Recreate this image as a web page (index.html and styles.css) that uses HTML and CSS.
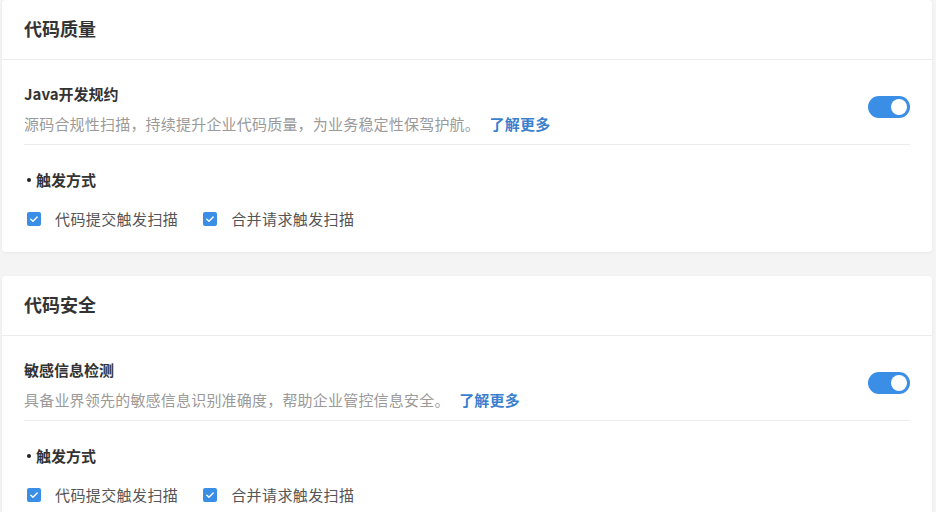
FILE: index.html
```html
<!DOCTYPE html>
<html>
<head>
    <title>代码扫描设置</title>
    <link rel="stylesheet" href="styles.css">
</head>
<body>
    <div class="page">
        <div class="card">
            <div class="card-header">代码质量</div>
            <div class="card-body">
                <div class="rule">
                    <div class="rule-text">
                        <div class="rule-title">Java开发规约</div>
                        <div class="rule-desc">源码合规性扫描，持续提升企业代码质量，为业务稳定性保驾护航。 <a href="#" class="more">了解更多</a></div>
                    </div>
                    <span class="switch on"><span class="knob"></span></span>
                </div>
                <div class="trigger-title"><span class="dot"></span>触发方式</div>
                <div class="checks">
                    <label class="check"><span class="box"><svg viewBox="0 0 14 14" width="14" height="14"><path d="M3.8 7.2 L6 9.3 L10.2 4.9" fill="none" stroke="#fff" stroke-width="1.4" stroke-linecap="round" stroke-linejoin="round"/></svg></span>代码提交触发扫描</label>
                    <label class="check"><span class="box"><svg viewBox="0 0 14 14" width="14" height="14"><path d="M3.8 7.2 L6 9.3 L10.2 4.9" fill="none" stroke="#fff" stroke-width="1.4" stroke-linecap="round" stroke-linejoin="round"/></svg></span>合并请求触发扫描</label>
                </div>
            </div>
        </div>

        <div class="card">
            <div class="card-header">代码安全</div>
            <div class="card-body">
                <div class="rule">
                    <div class="rule-text">
                        <div class="rule-title">敏感信息检测</div>
                        <div class="rule-desc">具备业界领先的敏感信息识别准确度，帮助企业管控信息安全。 <a href="#" class="more">了解更多</a></div>
                    </div>
                    <span class="switch on"><span class="knob"></span></span>
                </div>
                <div class="trigger-title"><span class="dot"></span>触发方式</div>
                <div class="checks">
                    <label class="check"><span class="box"><svg viewBox="0 0 14 14" width="14" height="14"><path d="M3.8 7.2 L6 9.3 L10.2 4.9" fill="none" stroke="#fff" stroke-width="1.4" stroke-linecap="round" stroke-linejoin="round"/></svg></span>代码提交触发扫描</label>
                    <label class="check"><span class="box"><svg viewBox="0 0 14 14" width="14" height="14"><path d="M3.8 7.2 L6 9.3 L10.2 4.9" fill="none" stroke="#fff" stroke-width="1.4" stroke-linecap="round" stroke-linejoin="round"/></svg></span>合并请求触发扫描</label>
                </div>
            </div>
        </div>
    </div>
</body>
</html>
```

FILE: styles.css
```css
body {
    margin: 0;
    background: #f4f4f5;
    font-family: "Noto Sans CJK SC", "Noto Sans", sans-serif;
    color: #333;
}
.page {
    width: 930px;
    padding-left: 2px;
    display: flex;
    flex-direction: column;
    gap: 24px;
}
.card {
    background: #fff;
    border-radius: 4px;
    box-shadow: 0 1px 3px rgba(0, 0, 0, 0.06);
}
.card-header {
    height: 59px;
    line-height: 57px;
    padding: 0 22px;
    font-size: 18px;
    font-weight: 600;
    color: #333;
    border-bottom: 1px solid #ececec;
}
.card-body {
    padding: 0 22px 23px 22px;
}
.rule {
    display: flex;
    align-items: center;
    justify-content: space-between;
    padding: 24px 0 10px 0;
    border-bottom: 1px solid #ececec;
}
.rule-title {
    font-size: 15px;
    font-weight: 600;
    line-height: 20px;
    color: #333;
}
.rule-desc {
    margin-top: 10px;
    font-size: 15px;
    letter-spacing: 0.2px;
    line-height: 20px;
    color: #9a9a9a;
}
.more {
    color: #3c7fcf;
    text-decoration: none;
    font-weight: 600;
    margin-left: 6px;
}
.switch {
    width: 42px;
    height: 22px;
    border-radius: 11px;
    background: #ccc;
    position: relative;
    margin-bottom: 4px;
}
.switch.on {
    background: #3a8ee6;
}
.knob {
    position: absolute;
    top: 3px;
    right: 3px;
    width: 16px;
    height: 16px;
    border-radius: 50%;
    background: #fff;
}
.trigger-title {
    display: flex;
    align-items: center;
    margin-top: 25px;
    font-size: 15px;
    font-weight: 600;
    line-height: 20px;
    color: #333;
}
.dot {
    width: 4px;
    height: 4px;
    border-radius: 50%;
    background: #222;
    margin-left: 3px;
    margin-right: 5px;
}
.checks {
    margin-top: 19px;
    display: flex;
    gap: 22px;
}
.check {
    display: flex;
    align-items: center;
    font-size: 15px;
    letter-spacing: 0.4px;
    line-height: 20px;
    color: #555;
}
.box {
    width: 14px;
    height: 14px;
    border-radius: 2px;
    background: #3a8ee6;
    margin-left: 3px;
    margin-right: 14px;
    display: flex;
}
```
